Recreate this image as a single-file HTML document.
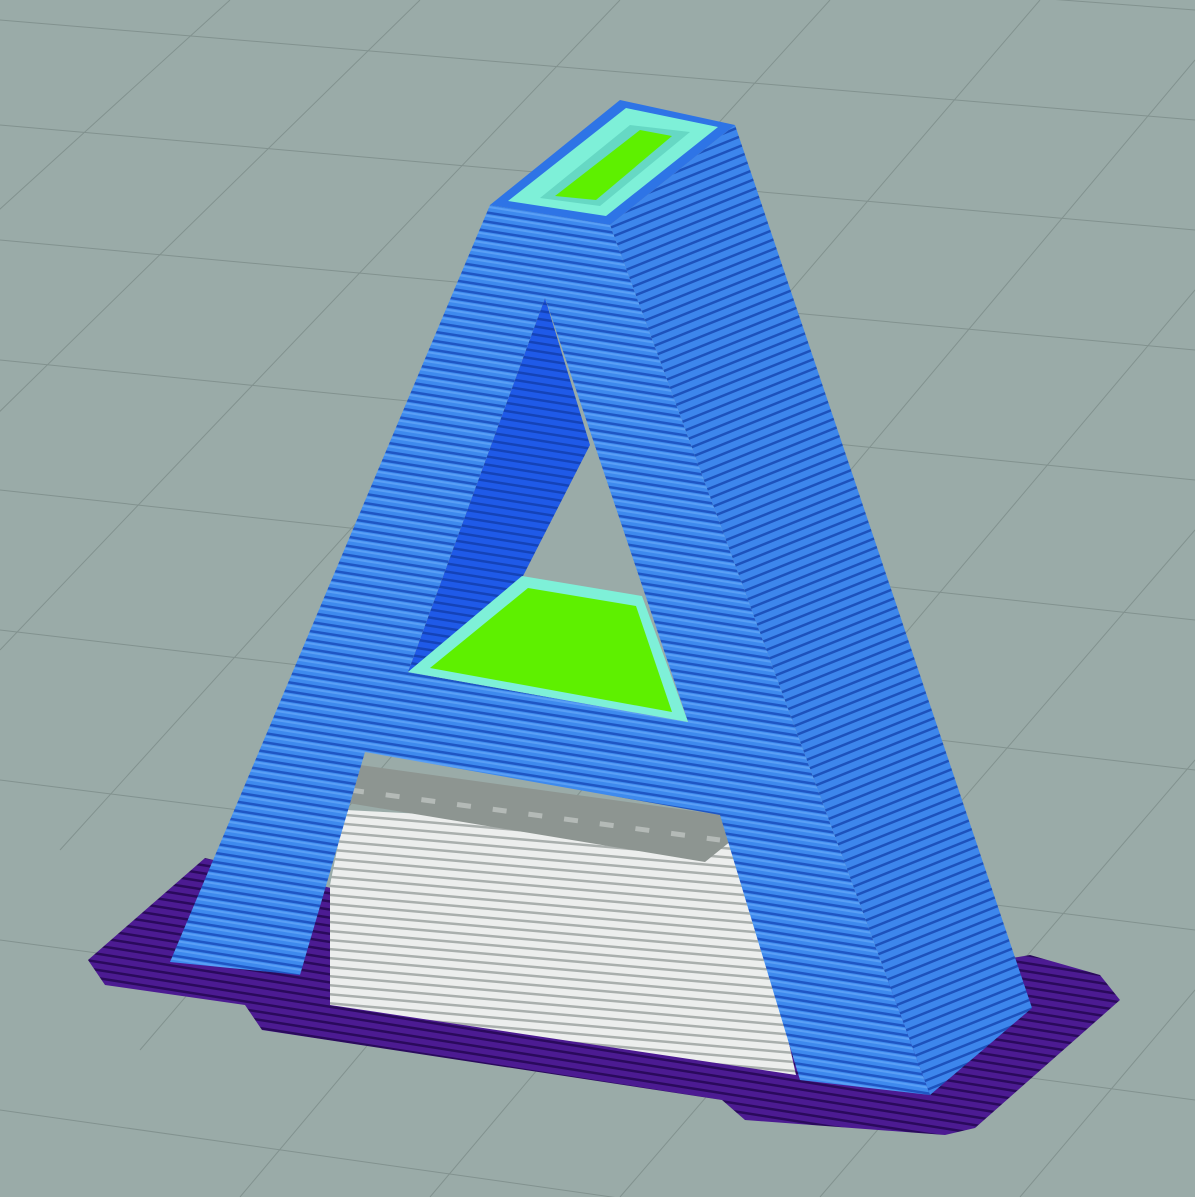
<!DOCTYPE html>
<html><head><meta charset="utf-8"><style>html,body{margin:0;padding:0;background:#9aaba8;overflow:hidden;width:1195px;height:1197px}svg{display:block}</style></head>
<body>
<svg width="1195" height="1197" viewBox="0 0 1195 1197" xmlns="http://www.w3.org/2000/svg">
<defs>
<pattern id="pf" width="40" height="9" patternUnits="userSpaceOnUse" patternTransform="rotate(9)">
<rect width="40" height="9" fill="#3e8aee"/><rect y="6.5" width="40" height="2.5" fill="#1f56c4"/><rect y="1" width="40" height="2" fill="#5a9ff5"/></pattern>
<pattern id="ps" width="40" height="9" patternUnits="userSpaceOnUse" patternTransform="rotate(-22)">
<rect width="40" height="9" fill="#3d86ec"/><rect y="6.5" width="40" height="2.5" fill="#1d52bc"/></pattern>
<pattern id="pp" width="40" height="8" patternUnits="userSpaceOnUse" patternTransform="rotate(9)">
<rect width="40" height="8" fill="#4c1b92"/><rect y="5.5" width="40" height="2.5" fill="#2a0a5c"/></pattern>
<pattern id="pw" width="40" height="9" patternUnits="userSpaceOnUse" patternTransform="rotate(5)">
<rect width="40" height="9" fill="#eceeed"/><rect y="6.5" width="40" height="2.5" fill="#a9afad"/></pattern>
<pattern id="pi" width="40" height="8" patternUnits="userSpaceOnUse" patternTransform="rotate(9)">
<rect width="40" height="8" fill="#1f5ae8"/><rect y="5.5" width="40" height="2.5" fill="#1443b8"/></pattern>
</defs>
<rect width="1195" height="1197" fill="#9aaba8"/>
<g stroke="#82928f" stroke-width="1" fill="none">
<path d="M0,20 L1195,120 M0,125 L1195,230 M0,240 L1195,350 M0,360 L1195,480 M0,490 L1195,620 M0,630 L1195,770 M0,780 L1195,930 M0,940 L1195,1100 M0,1110 L1195,1280 M0,-80 L1195,10"/>
<path d="M230,0 L-100,300 M420,0 L-60,470 M620,0 L0,650 M830,0 L60,850 M1040,0 L140,1050 M1195,60 L240,1197 M1195,290 L430,1197 M1195,530 L620,1197 M1195,760 L820,1197 M1195,990 L1020,1197"/>
</g>
<path d="M88,960 L205,858 L300,880 L760,1000 L1030,955 L1100,975 L1120,1000 L975,1128 L945,1135 L745,1120 L722,1100 L262,1030 L245,1005 L105,985 Z" fill="url(#pp)"/>
<path d="M610,225 L735,125 L1032,1008 L930,1095 Z" fill="url(#ps)"/>
<path d="M330,885 L345,810 L742,830 L796,1075 L330,1005 Z" fill="url(#pw)"/>
<path d="M330,770 L360,765 L722,815 L742,832 L705,862 L330,800 Z" fill="#8d9591"/>
<path d="M350,790 L720,840" stroke="#b4bab7" stroke-width="5" stroke-dasharray="14 22"/>
<path fill-rule="evenodd" fill="url(#pf)" d="M490,205 L610,225 L930,1095 L800,1080 L720,815 L365,752 L300,975 L170,962 Z M545,298 L408,672 L688,722 Z"/>
<path d="M545,298 L408,672 L688,722 Z" fill="#9aaba8"/>
<path d="M545,298 L590,445 L522,578 L408,672 Z" fill="url(#pi)"/>
<path d="M522,576 L642,596 L688,722 L408,672 Z" fill="#7ef0d8"/>
<path d="M528,588 L636,606 L672,712 L430,668 Z" fill="#5ef000"/>
<path d="M490,205 L620,100 L735,125 L610,225 Z" fill="#2e74e6"/>
<path d="M508,201 L626,108 L718,127 L606,216 Z" fill="#7ef0d8"/>
<path d="M540,198 L630,125 L690,132 L600,206 Z" fill="#66d8c4"/>
<path d="M555,196 L640,130 L672,136 L596,200 Z" fill="#5ef000"/>
</svg>
</body></html>
